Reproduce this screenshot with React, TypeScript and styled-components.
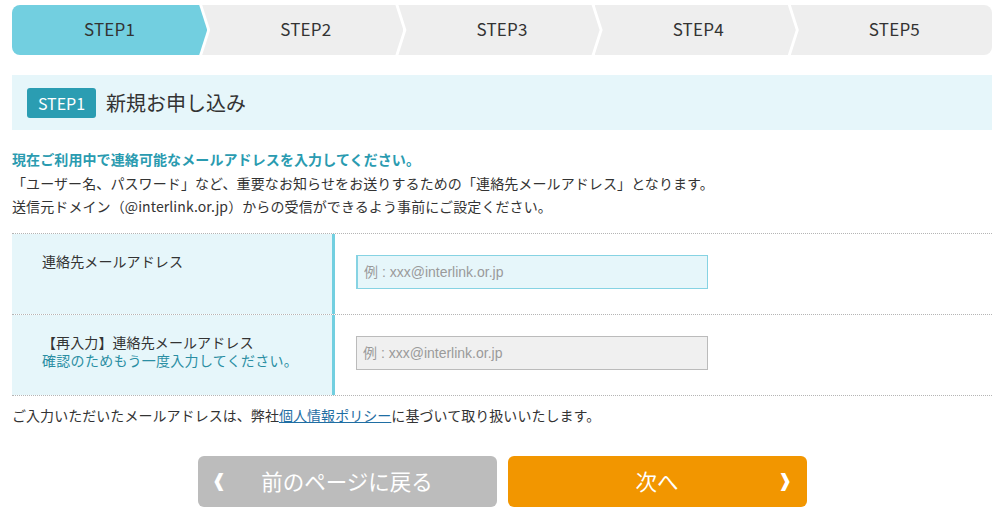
import styled, { createGlobalStyle } from "styled-components"

const GlobalStyle = createGlobalStyle`
  body {
    margin: 0;
    background: #fff;
    color: #333;
    font-family: "Noto Sans CJK JP", "Noto Sans", sans-serif;
    font-size: 14px;
  }
`

const STEPS = ["STEP1", "STEP2", "STEP3", "STEP4", "STEP5"]
const CURRENT = 0

const Page = styled.div`
  width: 980px;
  margin: 0 0 0 12px;
  padding-top: 5px;
`

const StepBar = styled.ol`
  display: flex;
  list-style: none;
  margin: 0;
  padding: 0;
  height: 50px;
`

const Step = styled.li<{ $active: boolean; $first: boolean; $last: boolean }>`
  flex: 1;
  display: flex;
  align-items: center;
  justify-content: center;
  margin-left: ${(p) => (p.$first ? "0" : "-5px")};
  padding-left: ${(p) => (p.$first ? "0" : "6px")};
  padding-bottom: 3px;
  background: ${(p) => (p.$active ? "#72cfe0" : "#eeeeee")};
  color: #333;
  font-size: 17px;
  letter-spacing: 0.2px;
  border-radius: ${(p) =>
    p.$first ? "8px 0 0 8px" : p.$last ? "0 8px 8px 0" : "0"};
  clip-path: ${(p) =>
    p.$last
      ? "polygon(0 0, 100% 0, 100% 100%, 0 100%, 8px 50%)"
      : p.$first
      ? "polygon(0 0, calc(100% - 8px) 0, 100% 50%, calc(100% - 8px) 100%, 0 100%)"
      : "polygon(0 0, calc(100% - 8px) 0, 100% 50%, calc(100% - 8px) 100%, 0 100%, 8px 50%)"};
`

const TitleBand = styled.div`
  margin-top: 20px;
  height: 55px;
  background: #e6f6fa;
  display: flex;
  align-items: center;
  gap: 10px;
  padding-left: 15px;
`

const Badge = styled.span`
  display: inline-flex;
  align-items: center;
  justify-content: center;
  width: 69px;
  height: 30px;
  border-radius: 3px;
  background: #2b9db2;
  color: #fff;
  font-size: 16px;
`

const Title = styled.h1`
  margin: 0;
  font-size: 20px;
  font-weight: 400;
  color: #333;
`

const Intro = styled.div`
  margin-top: 18px;
  line-height: 23.5px;
  font-size: 14px;
  letter-spacing: 0.1px;
`

const Lead = styled.p`
  margin: 0;
  color: #2a9bb0;
  font-weight: 700;
`

const Line = styled.p`
  margin: 0;
`

const FormTable = styled.div`
  margin-top: 14px;
  border-top: 1px dotted #b5b5b5;
`

const FormRow = styled.div`
  display: grid;
  grid-template-columns: 320px 3px 1fr;
  border-bottom: 1px dotted #b5b5b5;
`

const LabelCell = styled.div`
  background: #e6f6fa;
  padding: 18px 0 0 30px;
  line-height: 18px;
  font-size: 14px;
  letter-spacing: 0.1px;
`

const Divider = styled.div`
  background: #72cfe0;
`

const Hint = styled.span`
  display: block;
  color: #2a8ea3;
  letter-spacing: 0.3px;
`

const FieldCell = styled.div`
  padding: 21px 0 25px 21px;
`

const EmailInput = styled.input<{ $focused?: boolean }>`
  box-sizing: border-box;
  width: 352px;
  height: 34px;
  padding: 0 6px;
  font-family: "Liberation Sans", "Noto Sans CJK JP", sans-serif;
  font-size: 14px;
  color: #333;
  border: 1px solid ${(p) => (p.$focused ? "#86d3e3" : "#bbbbbb")};
  background: ${(p) => (p.$focused ? "#e6f6fa" : "#f0f0f0")};
  outline: none;
  border-left-width: ${(p) => (p.$focused ? "2px" : "1px")};
  &::placeholder {
    color: #9a9a9a;
  }
`

const Note = styled.p`
  margin: 10px 0 0;
  font-size: 14px;
  line-height: 18px;
  letter-spacing: 0.05px;

  a {
    color: #1f6ea3;
    text-decoration: underline;
  }
`

const Actions = styled.div`
  display: flex;
  justify-content: center;
  gap: 11px;
  margin-top: 32px;
`

const NavButton = styled.button<{ $tone: "back" | "next" }>`
  display: grid;
  grid-template-columns: 1fr auto 1fr;
  align-items: center;
  width: 299px;
  height: 51px;
  padding: 0 14px 2px;
  border: none;
  border-radius: 6px;
  background: ${(p) => (p.$tone === "next" ? "#f29600" : "#bcbcbc")};
  color: #fff;
  font-family: "Noto Sans CJK JP", sans-serif;
  font-size: 21.5px;
  cursor: pointer;
`

const Chevron = styled.span<{ $side: "left" | "right" }>`
  justify-self: ${(p) => (p.$side === "left" ? "start" : "end")};
  font-family: "DejaVu Sans", sans-serif;
  font-size: 18px;
  font-weight: 700;
`

export default function App() {
  return (
    <>
      <GlobalStyle />
      <Page>
        <StepBar>
          {STEPS.map((s, i) => (
            <Step
              key={s}
              $active={i === CURRENT}
              $first={i === 0}
              $last={i === STEPS.length - 1}
            >
              {s}
            </Step>
          ))}
        </StepBar>

        <TitleBand>
          <Badge>STEP1</Badge>
          <Title>新規お申し込み</Title>
        </TitleBand>

        <Intro>
          <Lead>現在ご利用中で連絡可能なメールアドレスを入力してください。</Lead>
          <Line>
            「ユーザー名、パスワード」など、重要なお知らせをお送りするための「連絡先メールアドレス」となります。
          </Line>
          <Line>
            送信元ドメイン（@interlink.or.jp）からの受信ができるよう事前にご設定ください。
          </Line>
        </Intro>

        <FormTable>
          <FormRow>
            <LabelCell>連絡先メールアドレス</LabelCell>
            <Divider />
            <FieldCell>
              <EmailInput $focused placeholder="例 : xxx@interlink.or.jp" />
            </FieldCell>
          </FormRow>
          <FormRow>
            <LabelCell>
              【再入力】連絡先メールアドレス
              <Hint>確認のためもう一度入力してください。</Hint>
            </LabelCell>
            <Divider />
            <FieldCell>
              <EmailInput placeholder="例 : xxx@interlink.or.jp" />
            </FieldCell>
          </FormRow>
        </FormTable>

        <Note>
          ご入力いただいたメールアドレスは、弊社
          <a href="#policy">個人情報ポリシー</a>
          に基づいて取り扱いいたします。
        </Note>

        <Actions>
          <NavButton $tone="back">
            <Chevron $side="left">❰</Chevron>
            <span>前のページに戻る</span>
            <span />
          </NavButton>
          <NavButton $tone="next">
            <span />
            <span>次へ</span>
            <Chevron $side="right">❱</Chevron>
          </NavButton>
        </Actions>
      </Page>
    </>
  )
}
